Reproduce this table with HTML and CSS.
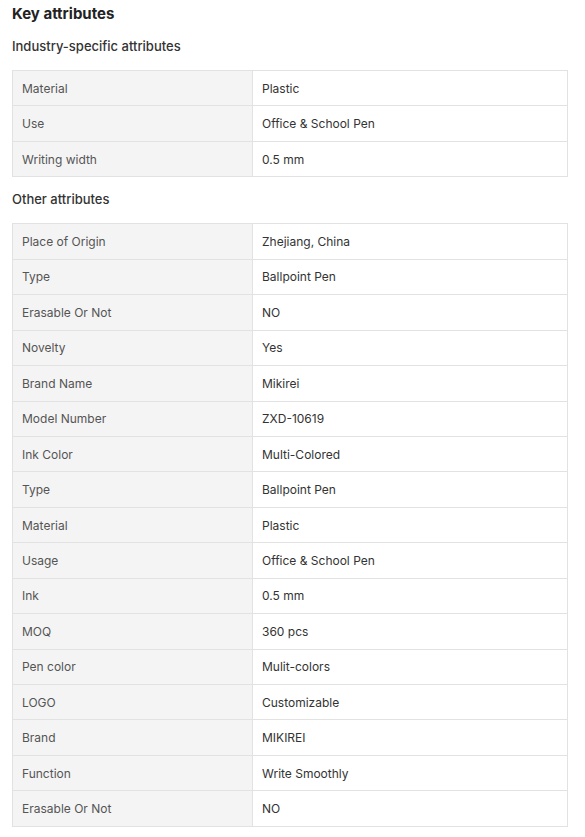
FILE: index.html
```html
<!DOCTYPE html>
<html>
<head>
<meta charset="utf-8">
<link rel="stylesheet" href="styles.css">
</head>
<body>
<div class="attrs">
  <h2 class="title">Key attributes</h2>
  <h3 class="subtitle">Industry-specific attributes</h3>
  <table class="grid">
    <tr><td class="k">Material</td><td class="v">Plastic</td></tr>
    <tr><td class="k">Use</td><td class="v">Office &amp; School Pen</td></tr>
    <tr><td class="k">Writing width</td><td class="v">0.5 mm</td></tr>
  </table>
  <h3 class="subtitle">Other attributes</h3>
  <table class="grid">
    <tr><td class="k">Place of Origin</td><td class="v">Zhejiang, China</td></tr>
    <tr><td class="k">Type</td><td class="v">Ballpoint Pen</td></tr>
    <tr><td class="k">Erasable Or Not</td><td class="v">NO</td></tr>
    <tr><td class="k">Novelty</td><td class="v">Yes</td></tr>
    <tr><td class="k">Brand Name</td><td class="v">Mikirei</td></tr>
    <tr><td class="k">Model Number</td><td class="v">ZXD-10619</td></tr>
    <tr><td class="k">Ink Color</td><td class="v">Multi-Colored</td></tr>
    <tr><td class="k">Type</td><td class="v">Ballpoint Pen</td></tr>
    <tr><td class="k">Material</td><td class="v">Plastic</td></tr>
    <tr><td class="k">Usage</td><td class="v">Office &amp; School Pen</td></tr>
    <tr><td class="k">Ink</td><td class="v">0.5 mm</td></tr>
    <tr><td class="k">MOQ</td><td class="v">360 pcs</td></tr>
    <tr><td class="k">Pen color</td><td class="v">Mulit-colors</td></tr>
    <tr><td class="k">LOGO</td><td class="v">Customizable</td></tr>
    <tr><td class="k">Brand</td><td class="v">MIKIREI</td></tr>
    <tr><td class="k">Function</td><td class="v">Write Smoothly</td></tr>
    <tr><td class="k">Erasable Or Not</td><td class="v">NO</td></tr>
  </table>
</div>
</body>
</html>
```
FILE: styles.css
```css
html, body {
  margin: 0;
  padding: 0;
  background: #fff;
}
body {
  font-family: Inter, "Noto Sans", sans-serif;
  color: #222;
}
.attrs {
  padding: 4px 0 0 12px;
  width: 556px;
}
.title {
  margin: 0;
  font-size: 15px;
  line-height: 20px;
  font-weight: 700;
  color: #222;
}
.subtitle {
  margin: 12px 0 14px;
  font-size: 13px;
  line-height: 20px;
  font-weight: 500;
  color: #333;
}
.grid {
  width: 556px;
  border-collapse: collapse;
  table-layout: fixed;
  font-size: 12px;
}
.grid td {
  border: 1px solid #e2e2e2;
  height: 34.4px;
  padding: 0 9px;
  vertical-align: middle;
  box-sizing: border-box;
}
.grid tr {
  height: 35.45px;
}
.k {
  width: 240px;
  background: #f4f4f4;
  color: #555;
}
.v {
  color: #333;
}
```
